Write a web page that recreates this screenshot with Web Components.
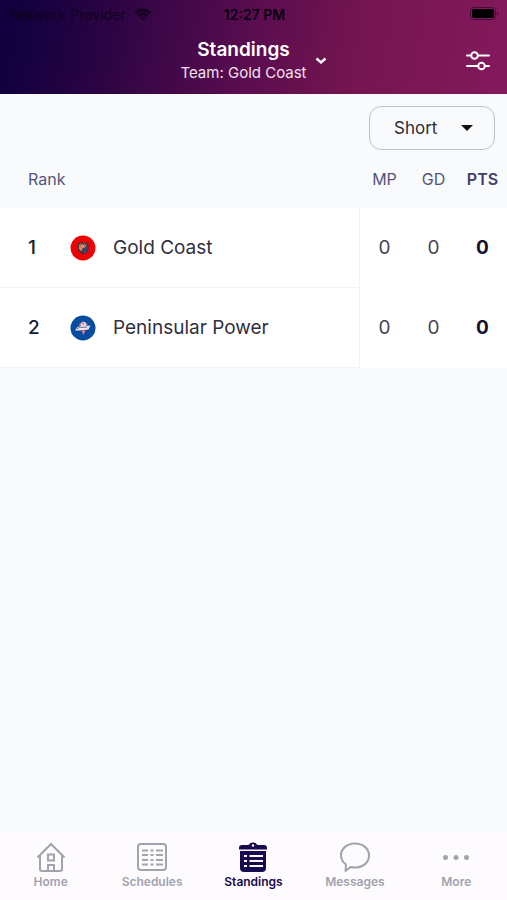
<!DOCTYPE html>
<html lang="en">
<head>
<meta charset="utf-8">
<meta name="viewport" content="width=device-width, initial-scale=1">
<title>Standings</title>
<style>
  body { margin: 0; font-family: Inter, "Liberation Sans", sans-serif; color: #24243a; background: #f8fafc; }
</style>
</head>
<body>
<app-shell>
  <app-header slot="header">
    <status-bar slot="status" carrier="Network Provider" time="12:27 PM"></status-bar>
    <span slot="title">Standings</span>
    <span slot="subtitle">Team: Gold Coast</span>
  </app-header>
  <view-select>Short</view-select>
  <standings-table></standings-table>
  <tab-bar slot="footer">
    <tab-item icon="home">Home</tab-item>
    <tab-item icon="schedules">Schedules</tab-item>
    <tab-item icon="standings" active>Standings</tab-item>
    <tab-item icon="messages">Messages</tab-item>
    <tab-item icon="more">More</tab-item>
  </tab-bar>
</app-shell>

<script>
class AppShell extends HTMLElement {
    constructor() {
        super();
        this.attachShadow({ mode: 'open' }).innerHTML = `
            <style>
                :host { display: flex; flex-direction: column; min-height: 100vh; }
                main { flex: 1; display: flex; flex-direction: column; }
            </style>
            <slot name="header"></slot>
            <main><slot></slot></main>
            <slot name="footer"></slot>
        `;
    }
}

class StatusBar extends HTMLElement {
    connectedCallback() {
        this.attachShadow({ mode: 'open' }).innerHTML = `
            <style>
                :host { display: grid; grid-template-columns: 1fr auto 1fr; align-items: center; height: 28px; padding: 0 8px 0 10px; color: #08000f; font-size: 14px; }
                .carrier { display: flex; align-items: center; gap: 8px; color: #10001c; white-space: nowrap; }
                .time { font-weight: 600; }
                .battery { justify-self: end; }
                svg { display: block; }
            </style>
            <div class="carrier">
                <span>${this.getAttribute('carrier')}</span>
                <svg width="18" height="13" viewBox="0 0 20 14" fill="none" stroke="currentColor" stroke-width="2.8">
                    <path d="M1.7 5.3C6.4.8 13.6.8 18.3 5.3"/>
                    <path d="M4.9 8.6c3-2.8 7.2-2.8 10.2 0"/>
                    <path d="M10 13.6 6.9 10.7c1.9-1.6 4.3-1.6 6.2 0z" fill="currentColor" stroke="none"/>
                </svg>
            </div>
            <span class="time">${this.getAttribute('time')}</span>
            <svg class="battery" width="29" height="14" viewBox="0 0 29 14">
                <rect x=".5" y=".5" width="25" height="12" rx="3.5" fill="none" stroke="#4a0a3e"/>
                <rect x="2" y="2" width="22" height="9" rx="2" fill="#000"/>
                <path d="M27 4.5c1.6.6 1.6 3.6 0 4.2z" fill="#4a0a3e"/>
            </svg>
        `;
    }
}

class AppHeader extends HTMLElement {
    constructor() {
        super();
        this.attachShadow({ mode: 'open' }).innerHTML = `
            <style>
                :host { display: block; color: #fff; background: linear-gradient(100deg, #10003f 3%, #2c0443 22%, #5b0d50 50%, #74154f 70%, #84195c 100%); }
                .bar { display: grid; grid-template-columns: 1fr auto 1fr; align-items: center; height: 66px; padding: 0 16px; }
                button { font: inherit; color: inherit; background: none; border: 0; padding: 0; cursor: pointer; }
                .team { grid-column: 2; display: grid; grid-template-columns: auto 20px; align-items: center; text-align: center; }
                .lines { display: flex; flex-direction: column; }
                .title { font-size: 19px; line-height: 24px; font-weight: 600; }
                .subtitle { font-size: 15px; line-height: 22px; color: #f3e0f0; }
                .chevron { justify-self: end; }
                .filter { justify-self: end; }
                svg { display: block; fill: none; stroke: currentColor; }
            </style>
            <slot name="status"></slot>
            <div class="bar">
                <button class="team">
                    <span class="lines">
                        <span class="title"><slot name="title"></slot></span>
                        <span class="subtitle"><slot name="subtitle"></slot></span>
                    </span>
                    <svg class="chevron" width="12" height="8" viewBox="0 0 12 8" stroke-width="2.4"><path d="m1.5 1.5 4.5 4 4.5-4"/></svg>
                </button>
                <button class="filter" aria-label="Filters">
                    <svg width="26" height="20" viewBox="0 0 26 20" stroke-width="2" stroke-linecap="round">
                        <path d="M2 4.5h4M13 4.5h11M2 15h11M20 15h4"/>
                        <circle cx="9.5" cy="4.5" r="3.3"/>
                        <circle cx="16.5" cy="15" r="3.3"/>
                    </svg>
                </button>
            </div>
        `;
    }
}

class ViewSelect extends HTMLElement {
    connectedCallback() {
        this.attachShadow({ mode: 'open' }).innerHTML = `
            <style>
                :host { display: flex; justify-content: flex-end; padding: 12px 12px 0; }
                .field { display: grid; align-items: center; width: 126px; }
                select, svg { grid-area: 1 / 1; }
                select { appearance: none; width: 100%; height: 44px; padding: 0 44px 0 24px; border: 1px solid #bfc1c5; border-radius: 12px; background: transparent; font: inherit; font-size: 17px; color: #2b2b33; }
                svg { justify-self: end; margin-right: 22px; pointer-events: none; fill: #111; }
            </style>
            <div class="field">
                <select aria-label="Table view">
                    <option>${this.textContent}</option>
                    <option>Full</option>
                </select>
                <svg width="12" height="6" viewBox="0 0 12 6"><path d="M0 0h12L6 6z"/></svg>
            </div>
        `;
    }
}

const teams = [
    { name: 'Gold Coast', logo: 'shield', stats: [0, 0, 0] },
    { name: 'Peninsular Power', logo: 'star', stats: [0, 0, 0] }
];

class TeamLogo extends HTMLElement {
    connectedCallback() {
        const logos = {
            shield: `
                <circle cx="13" cy="13" r="12.5" fill="#ee0305"/>
                <path d="M8 8.5 10 7l3 .8L16 7l2.5 1.500v5.500c0 2.500-2.500 4.500-5.200 5.500C10.500 18.500 8 16.500 8 14z" fill="#463438"/>
                <path d="M13.5 13 17.500 10v4c0 2-2 3.500-4 4.500z" fill="#32477c"/>
                <path d="m9 9 1.500 2L13 8.500l1 2.500 3-2-1.500 3-3 1.500-1 3-2.500-3z" fill="#d8795d"/>
                <path d="m10.500 8.500 1 3M14.500 8.500l-1.500 4M9.500 13l2 2" stroke="#efb49c" stroke-width=".7"/>`,
            star: `
                <circle cx="13" cy="13" r="12.5" fill="#064ca0"/>
                <path d="M9 8.5 13.500 6 17 8.500l2 3-1 3-2.500 1-2 5-2-4.500-3-1.500z" fill="#b5475f"/>
                <circle cx="13.5" cy="10" r="3" fill="#d8dce9"/>
                <path d="m5 15.500 2.500-3.500 4-1 3 .5 6-1-2 4-5.500.5-4 .5z" fill="#e9e6ef"/>
                <path d="m7 14 3-2 2 .5 5-.5M12 8l2 1.500" stroke="#49538b" fill="none" stroke-width=".8"/>
                <path d="m12 16 3-.5-1.500 4z" fill="#a9a6cb"/>`
        };
        this.attachShadow({ mode: 'open' }).innerHTML = `
            <style>
                :host { display: block; flex: none; }
                svg { display: block; }
            </style>
            <svg width="26" height="26" viewBox="0 0 26 26" aria-hidden="true">${logos[this.getAttribute('name')]}</svg>
        `;
    }
}

class StandingsTable extends HTMLElement {
    connectedCallback() {
        const rows = teams.map((team, i) => `
            <tr>
                <td class="rank">${i + 1}</td>
                <td class="name"><div><team-logo name="${team.logo}"></team-logo><span>${team.name}</span></div></td>
                ${team.stats.map(value => `<td class="stat">${value}</td>`).join('')}
            </tr>`).join('');

        this.attachShadow({ mode: 'open' }).innerHTML = `
            <style>
                :host { display: block; }
                table { width: 100%; table-layout: fixed; border-collapse: separate; border-spacing: 0; }
                .rank-col { width: 70px; }
                .stat-col { width: 49px; }
                th { height: 58px; padding: 0; font-size: 16px; font-weight: 400; color: #55557a; }
                th.first { text-align: left; padding-left: 28px; }
                th:last-child { font-weight: 600; color: #403f6b; }
                td { height: 79px; padding: 0; background: #fff; font-size: 19px; border-bottom: 1px solid #f1f3f6; }
                .rank { padding-left: 28px; color: #18182c; font-weight: 500; }
                .name { border-right: 1px solid #f1f3f6; color: #30303e; }
                .name div { display: flex; align-items: center; gap: 17px; }
                .stat { text-align: center; color: #45454f; border-bottom-color: #fff; }
                .stat:last-child { font-weight: 700; color: #15122f; }
            </style>
            <table>
                <colgroup><col class="rank-col"><col><col class="stat-col"><col class="stat-col"><col class="stat-col"></colgroup>
                <thead><tr><th class="first" colspan="2">Rank</th><th>MP</th><th>GD</th><th>PTS</th></tr></thead>
                <tbody>${rows}</tbody>
            </table>
        `;
    }
}

class TabBar extends HTMLElement {
    constructor() {
        super();
        this.attachShadow({ mode: 'open' }).innerHTML = `
            <style>
                :host { display: block; background: #fefbff; }
                nav { display: grid; grid-auto-flow: column; grid-auto-columns: 1fr; }
            </style>
            <nav><slot></slot></nav>
        `;
    }
}

const tabIcons = {
    home: `
        <path d="M1.5 15.500 15 2l13.500 13.500"/>
        <path d="M4 13v14q0 2 2 2h18q2 0 2-2V13"/>
        <rect x="12" y="12.5" width="6" height="6"/>
        <path d="M12 29v-6h6v6"/>`,
    schedules: `
        <rect x="1" y="2" width="28" height="26" rx="3"/>
        <path d="M5 8.500h6M13.500 8.500h3M19 8.500h7M5 13h6M13.500 13h3M19 13h7M5 18h6M13.500 18h3M19 18h7M5 22.500h6M13.500 22.500h3M19 22.500h7"/>`,
    standings: `
        <path d="M1 7.500V6q0-3 3-3h6q1 0 1.500-1Q12 .5 15 .5t3.500 1.500q.5 1 1.500 1h6q3 0 3 3v1.500z" fill="currentColor" stroke="none"/>
        <path d="M2 9h26v17q0 4-4 4H6q-4 0-4-4z" fill="currentColor" stroke="none"/>
        <circle cx="15" cy="3.5" r="1.2" fill="#fefbff" stroke="none"/>
        <path d="M6 14h3M11.500 14H25M6 19h3M11.500 19H25M6 24h3M11.500 24H25" stroke="#fefbff"/>`,
    messages: `<path d="M6 22.500C2.500 20 1 17 1 13.500 1 6.500 7 1.500 15 1.500s14 5 14 12-6 12-14 12q-2.500 0-4.500-.5L5.500 29z" stroke-linejoin="round"/>`,
    more: `
        <g fill="currentColor" stroke="none"><circle cx="4.500" cy="15.500" r="2.500"/><circle cx="15" cy="15.500" r="2.500"/><circle cx="25.500" cy="15.500" r="2.500"/></g>`
};

class TabItem extends HTMLElement {
    connectedCallback() {
        this.attachShadow({ mode: 'open' }).innerHTML = `
            <style>
                :host { display: block; color: #a3a2ae; }
                :host([active]) { color: #170b4d; }
                a { display: flex; flex-direction: column; align-items: center; gap: 1px; padding: 10px 0; color: inherit; text-decoration: none; font-size: 12px; line-height: 16px; font-weight: 600; }
                svg { display: block; fill: none; stroke: currentColor; stroke-width: 2; }
            </style>
            <a href="#${this.getAttribute('icon')}" ${this.hasAttribute('active') ? 'aria-current="page"' : ''}>
                <svg width="30" height="31" viewBox="0 0 30 31" aria-hidden="true">${tabIcons[this.getAttribute('icon')]}</svg>
                <span><slot></slot></span>
            </a>
        `;
    }
}

customElements.define('app-shell', AppShell);
customElements.define('status-bar', StatusBar);
customElements.define('app-header', AppHeader);
customElements.define('view-select', ViewSelect);
customElements.define('team-logo', TeamLogo);
customElements.define('standings-table', StandingsTable);
customElements.define('tab-bar', TabBar);
customElements.define('tab-item', TabItem);
</script>
</body>
</html>
